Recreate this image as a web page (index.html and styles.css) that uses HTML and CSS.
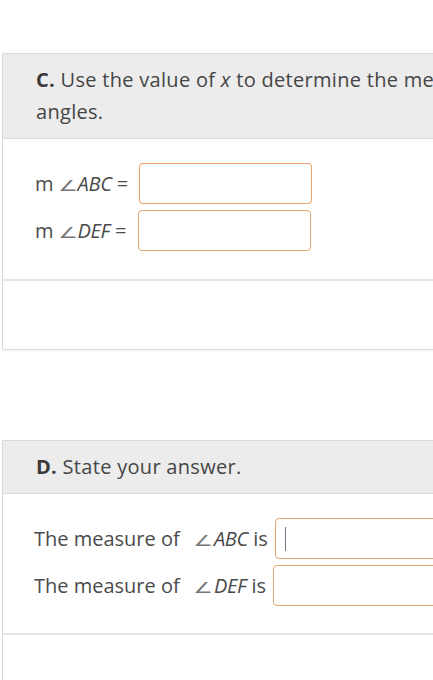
FILE: index.html
```html
<!DOCTYPE html>
<html>
<head>
<meta charset="utf-8">
<link rel="stylesheet" href="styles.css">
</head>
<body>
<div class="page">
  <section class="card card-c">
    <div class="card-head">
      <b>C.</b> Use the value of <i>x</i> to determine the measures of the<br>angles.
    </div>
    <div class="card-body">
      <div class="row"><span class="lbl">m<span class="ang">∠</span><i>ABC</i> =</span><span class="box box-a"></span></div>
      <div class="row"><span class="lbl">m<span class="ang">∠</span><i>DEF</i> =</span><span class="box"></span></div>
    </div>
    <div class="card-foot"></div>
  </section>

  <section class="card card-d">
    <div class="card-head">
      <b>D.</b> State your answer.
    </div>
    <div class="card-body">
      <div class="row"><span class="lbl">The measure of <span class="ang wide">∠</span><i>ABC</i> is</span><span class="box"><span class="caret"></span></span></div>
      <div class="row"><span class="lbl">The measure of <span class="ang wide">∠</span><i>DEF</i> is</span><span class="box"></span></div>
    </div>
    <div class="card-foot tall"></div>
  </section>
</div>
</body>
</html>
```

FILE: styles.css
```css
html, body {
  margin: 0;
  padding: 0;
  background: #ffffff;
  overflow: hidden;
  width: 433px;
  height: 680px;
}
.page {
  width: 680px;
  padding-top: 53px;
  padding-left: 2px;
  font-family: "Open Sans", "Noto Sans", sans-serif;
  font-size: 20px;
  color: #454545;
}
.card {
  border: 1px solid #d9d9d9;
  border-right: none;
  border-radius: 2px 0 0 2px;
  background: #fff;
  box-shadow: 0 1px 2px rgba(0,0,0,0.06);
}
.card-d {
  margin-top: 90px;
  border-bottom: none;
}
.card-head {
  background: #ececec;
  border-bottom: 1px solid #dadada;
  padding: 10px 0 10px 33px;
  line-height: 32px;
  color: #454545;
  letter-spacing: 0.3px;
}
.card-head b {
  font-weight: 700;
  color: #3a3a3a;
}
.card-body {
  padding: 24px 0 28px 31px;
  display: flex;
  flex-direction: column;
  gap: 6px;
}
.card-d .card-body {
  padding-left: 30px;
  padding-top: 24px;
  padding-bottom: 27px;
}
.row {
  display: flex;
  align-items: center;
  gap: 11px;
  height: 41px;
}
.card-d .row {
  gap: 7px;
}
.lbl {
  white-space: nowrap;
  color: #4a4a4a;
  padding-left: 1px;
}
.lbl i {
  font-style: italic;
  letter-spacing: -0.3px;
}
.ang {
  display: inline-block;
  width: 16px;
  text-align: center;
  font-family: "DejaVu Sans", sans-serif;
  font-size: 15px;
  color: #777;
  transform: scaleX(1.45);
  margin: 0 2px 0 6px;
}
.ang.wide {
  margin-left: 10px;
  margin-right: 3px;
}
.box {
  box-sizing: border-box;
  width: 173px;
  height: 41px;
  border: 1.5px solid #e5a76f;
  border-radius: 4px;
  background: #fff;
  display: flex;
  align-items: center;
  padding-left: 9px;
}
.box-a {
  border-top-color: #e99a6e;
}
.caret {
  width: 1.5px;
  height: 24px;
  background: #6c7a88;
}
.card-foot {
  border-top: 2px solid #e6e6e6;
  height: 68px;
}
.card-foot.tall {
  height: 60px;
}
```
